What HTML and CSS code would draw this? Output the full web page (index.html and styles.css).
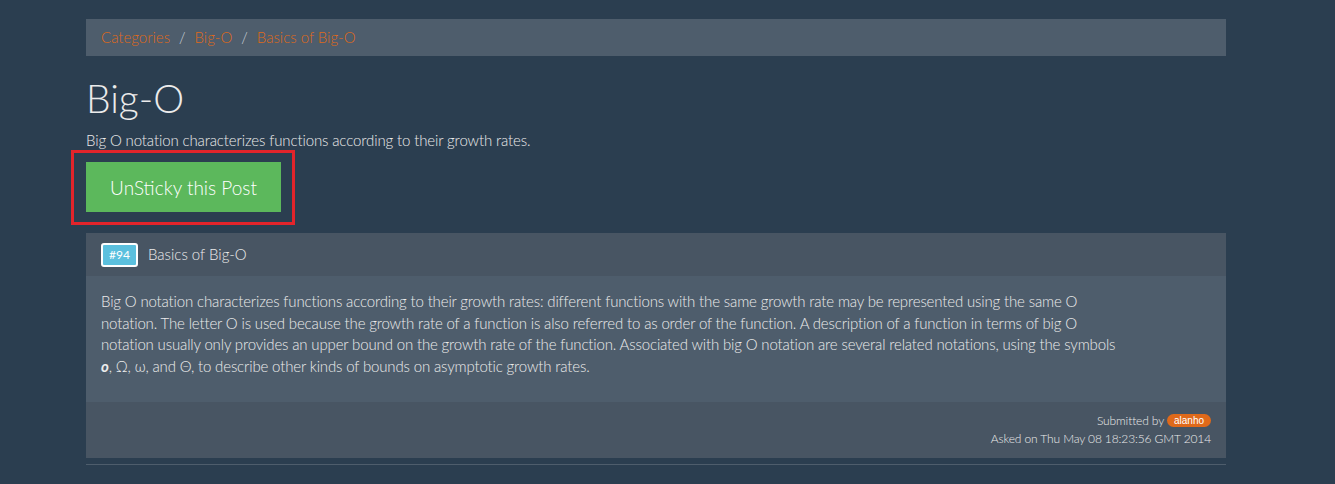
FILE: index.html
```html
<!DOCTYPE html>
<html>
<head>
<meta charset="utf-8">
<link rel="stylesheet" href="styles.css">
</head>
<body>
<div class="page">
  <div class="container">
    <ol class="breadcrumb">
      <li><a href="#">Categories</a></li>
      <li class="sep">/</li>
      <li><a href="#">Big-O</a></li>
      <li class="sep">/</li>
      <li><a href="#">Basics of Big-O</a></li>
    </ol>
    <h1 class="title">Big-O</h1>
    <p class="lead-text">Big O notation characterizes functions according to their growth rates.</p>
    <div class="btn-wrap">
      <button class="btn-success">UnSticky this Post</button>
    </div>
    <div class="panel">
      <div class="panel-heading">
        <span class="badge">#94</span>
        <span class="panel-title">Basics of Big-O</span>
      </div>
      <div class="panel-body">
        <p class="body-text">Big O notation characterizes functions according to their growth rates: different functions with the same growth rate may be represented using the same O notation. The letter O is used because the growth rate of a function is also referred to as order of the function. A description of a function in terms of big O notation usually only provides an upper bound on the growth rate of the function. Associated with big O notation are several related notations, using the symbols <i>o</i>, Ω, ω, and Θ, to describe other kinds of bounds on asymptotic growth rates.</p>
      </div>
      <div class="panel-footer">
        <div class="footer-line">Submitted by <span class="label-user">alanho</span></div>
        <div class="footer-line">Asked on Thu May 08 18:23:56 GMT 2014</div>
      </div>
    </div>
    <hr class="rule">
  </div>
</div>
</body>
</html>
```

FILE: styles.css
```css
html, body {
  margin: 0;
  padding: 0;
  background: #2b3e50;
}
body {
  font-family: Lato, "Open Sans", sans-serif;
  font-size: 15px;
  font-weight: 300;
  line-height: 1.428571;
  color: #ebebeb;
}
.page {
  padding: 19px 0 0 86px;
}
.container {
  width: 1140px;
}
.breadcrumb {
  list-style: none;
  margin: 0 0 21px 0;
  padding: 8px 15px;
  background: #4e5d6c;
  display: flex;
  height: 21px;
  align-items: center;
}
.breadcrumb li {
  line-height: 21px;
}
.breadcrumb a {
  color: #df691a;
  text-decoration: none;
}
.breadcrumb .sep {
  color: #c8d0d8;
  padding: 0 9px 0 9px;
}
.title {
  font-size: 39px;
  font-weight: 300;
  line-height: 1.1;
  margin: 21px 0 10.5px 0;
  color: #ebebeb;
}
.lead-text {
  margin: 0 0 10.5px 0;
  letter-spacing: -0.12px;
}
.btn-wrap {
  position: relative;
  width: 195px;
  margin-bottom: 21px;
}
.btn-wrap::after {
  content: "";
  position: absolute;
  left: -15px;
  top: -12px;
  right: -14px;
  bottom: -13px;
  border: 3px solid #e3242b;
}
.btn-success {
  display: block;
  width: 195px;
  height: 50px;
  background: #5cb85c;
  border: none;
  color: #fff;
  font-family: Lato, sans-serif;
  font-weight: 300;
  font-size: 19px;
  padding: 0;
  text-align: center;
  cursor: pointer;
}
.panel {
  background: #4e5d6c;
}
.panel-heading {
  background: #485563;
  height: 43px;
  padding: 0 15px;
  display: flex;
  align-items: center;
}
.badge {
  box-sizing: border-box;
  width: 37px;
  height: 24px;
  background: #5bc0de;
  border: 2px solid #fff;
  border-radius: 3px;
  color: #fff;
  font-size: 12px;
  font-weight: 400;
  display: flex;
  align-items: center;
  justify-content: center;
  margin-right: 10px;
}
.panel-title {
  font-size: 15px;
}
.panel-body {
  padding: 15px;
  height: 96px;
}
.body-text {
  margin: 0;
  max-width: 1015px;
  letter-spacing: -0.15px;
}
.body-text i {
  font-weight: 700;
}
.panel-footer {
  background: #485563;
  padding: 10px 15px;
  text-align: right;
  font-size: 12px;
  line-height: 18px;
  letter-spacing: -0.12px;
}
.label-user {
  display: inline-block;
  background: #df691a;
  color: #fff;
  font-family: "Liberation Sans", Arial, sans-serif;
  font-weight: 400;
  letter-spacing: 0;
  font-size: 10px;
  line-height: 13px;
  padding: 0 7px;
  border-radius: 8px;
  vertical-align: 1px;
}
.rule {
  border: 0;
  border-top: 1px solid #4e5d6c;
  margin: 6px 0 0 0;
}
```
